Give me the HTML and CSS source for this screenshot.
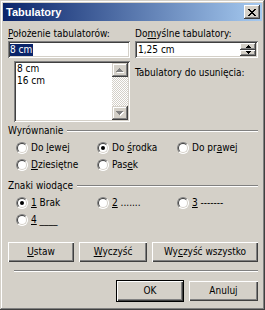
FILE: index.html
```html
<!DOCTYPE html>
<html lang="pl">
<head>
<meta charset="utf-8">
<title>Tabulatory</title>
<link rel="stylesheet" href="styles.css">
</head>
<body>
<div class="window">
  <div class="titlebar">
    <span class="title">Tabulatory</span>
    <span class="close">
      <svg width="8" height="7" viewBox="0 0 8 7" shape-rendering="crispEdges"><path d="M0 0h2v1H0zM6 0h2v1H6zM1 1h2v1H1zM5 1h2v1H5zM2 2h4v1H2zM3 3h2v1H3zM2 4h4v1H2zM1 5h2v1H1zM5 5h2v1H5zM0 6h2v1H0zM6 6h2v1H6z"/></svg>
    </span>
  </div>
  <div class="content">
    <div class="top">
      <div class="col">
        <div class="lbl"><u>P</u>ołożenie tabulatorów:</div>
        <div class="edit"><span class="sel">8 cm</span></div>
        <div class="listbox">
          <div class="items">
            <div>8 cm</div>
            <div>16 cm</div>
          </div>
          <div class="vscroll">
            <div class="sbtn">
              <svg width="8" height="5" viewBox="0 0 8 5" shape-rendering="crispEdges"><path fill="#fff" d="M4 1h1v1H4zM3 2h3v1H3zM2 3h5v1H2zM1 4h7v1H1z"/><path fill="#808080" d="M3 0h1v1H3zM2 1h3v1H2zM1 2h5v1H1zM0 3h7v1H0z"/></svg>
            </div>
            <div class="track"></div>
            <div class="sbtn">
              <svg width="8" height="5" viewBox="0 0 8 5" shape-rendering="crispEdges"><path fill="#fff" d="M1 1h7v1H1zM2 2h5v1H2zM3 3h3v1H3zM4 4h1v1H4z"/><path fill="#808080" d="M0 0h7v1H0zM1 1h5v1H1zM2 2h3v1H2zM3 3h1v1H3z"/></svg>
            </div>
          </div>
        </div>
      </div>
      <div class="col">
        <div class="lbl">Do<u>m</u>yślne tabulatory:</div>
        <div class="edit spin-edit">
          <span class="val">1,25 cm</span>
          <div class="spin">
            <div class="spin-btn"><svg width="5" height="3" viewBox="0 0 5 3" shape-rendering="crispEdges"><path d="M2 0h1v1H2zM1 1h3v1H1zM0 2h5v1H0z"/></svg></div>
            <div class="spin-btn"><svg width="5" height="3" viewBox="0 0 5 3" shape-rendering="crispEdges"><path d="M0 0h5v1H0zM1 1h3v1H1zM2 2h1v1H2z"/></svg></div>
          </div>
        </div>
        <div class="lbl del">Tabulatory do usunięcia:</div>
      </div>
    </div>

    <div class="group-head"><span>Wyrównanie</span><i class="etch"></i></div>
    <div class="radios">
      <div class="opt"><span class="radio"></span><span>Do <u>l</u>ewej</span></div>
      <div class="opt"><span class="radio on"></span><span>Do <u>ś</u>rodka</span></div>
      <div class="opt"><span class="radio"></span><span>Do pr<u>a</u>wej</span></div>
      <div class="opt"><span class="radio"></span><span><u>D</u>ziesiętne</span></div>
      <div class="opt"><span class="radio"></span><span>Pas<u>e</u>k</span></div>
    </div>

    <div class="group-head second"><span>Znaki wiodące</span><i class="etch"></i></div>
    <div class="radios">
      <div class="opt"><span class="radio on"></span><span><u>1</u> Brak</span></div>
      <div class="opt"><span class="radio"></span><span><u>2</u> .......</span></div>
      <div class="opt"><span class="radio"></span><span><u>3</u> -------</span></div>
      <div class="opt"><span class="radio"></span><span><u>4</u> ____</span></div>
    </div>

    <div class="actions">
      <button class="btn w-ustaw"><u>U</u>staw</button>
      <button class="btn w-wyczysc"><u>W</u>yczyść</button>
      <button class="btn w-all">Wy<u>c</u>zyść wszystko</button>
    </div>

    <div class="separator"></div>

    <div class="footer">
      <button class="btn default w-ok">OK</button>
      <button class="btn w-cancel">Anuluj</button>
    </div>
  </div>
</div>
</body>
</html>
```

FILE: styles.css
```css
html, body {
  margin: 0;
  padding: 0;
  background: #d4d0c8;
}

.window {
  width: 265px;
  height: 310px;
  box-sizing: border-box;
  padding: 3px;
  background: #d4d0c8;
  box-shadow: inset -1px -1px #404040, inset 1px 1px #d4d0c8, inset -2px -2px #808080, inset 2px 2px #fff;
  display: flex;
  flex-direction: column;
  font-family: "DejaVu Sans Condensed", "Liberation Sans", sans-serif;
  font-size: 10px;
  color: #000;
}

.titlebar {
  height: 18px;
  display: flex;
  align-items: center;
  justify-content: space-between;
  padding: 0 2px 0 3px;
  background: linear-gradient(to right, #0a246a, #a6caf0);
}

.title {
  color: #fff;
  font-family: "Liberation Sans", sans-serif;
  font-weight: bold;
  font-size: 11px;
}

.close {
  width: 16px;
  height: 14px;
  box-sizing: border-box;
  background: #d4d0c8;
  box-shadow: inset -1px -1px #404040, inset 1px 1px #fff, inset -2px -2px #808080;
  display: flex;
  align-items: center;
  justify-content: center;
  padding-right: 1px;
}

.content {
  flex: 1;
  display: flex;
  flex-direction: column;
  padding: 6px 4px 0 5px;
}

.top {
  display: grid;
  grid-template-columns: 122px 123px;
  column-gap: 5px;
  align-items: start;
}

.col {
  display: flex;
  flex-direction: column;
}

.lbl {
  height: 13px;
  line-height: 13px;
  margin-bottom: 1px;
  white-space: nowrap;
}

.lbl.del {
  margin-top: 8px;
}

.edit {
  height: 17px;
  box-sizing: border-box;
  background: #fff;
  box-shadow: inset 1px 1px #808080, inset -1px -1px #fff, inset 2px 2px #404040, inset -2px -2px #d4d0c8;
  padding: 3px 2px 0;
  line-height: 12px;
  display: flex;
}

.sel {
  display: inline-block;
  height: 12px;
  background: #0a246a;
  color: #fff;
  padding-right: 1px;
}

.spin-edit {
  padding: 2px 2px 2px 3px;
  align-items: stretch;
}

.val {
  padding-top: 1px;
  flex: 1;
}

.spin {
  width: 16px;
  display: flex;
  flex-direction: column;
}

.spin-btn {
  flex: 1;
  background: #d4d0c8;
  box-shadow: inset -1px -1px #404040, inset 1px 1px #fff, inset -2px -2px #808080;
  display: flex;
  align-items: center;
  justify-content: center;
}

.listbox {
  margin: 3px 0 0 6px;
  height: 61px;
  box-sizing: border-box;
  background: #fff;
  box-shadow: inset 1px 1px #808080, inset -1px -1px #fff, inset 2px 2px #404040, inset -2px -2px #d4d0c8;
  padding: 2px;
  display: flex;
}

.items {
  flex: 1;
  line-height: 12px;
  padding-left: 1px;
}

.vscroll {
  width: 16px;
  display: flex;
  flex-direction: column;
}

.sbtn {
  height: 14px;
  background: #d4d0c8;
  box-shadow: inset -1px -1px #404040, inset 1px 1px #d4d0c8, inset -2px -2px #808080, inset 2px 2px #fff;
  display: flex;
  align-items: center;
  justify-content: center;
}

.track {
  flex: 1;
  background: repeating-conic-gradient(#d4d0c8 0 25%, #fff 0 50%) 0 0 / 2px 2px;
}

.group-head {
  height: 13px;
  margin-top: 2px;
  display: flex;
  align-items: center;
  gap: 4px;
  white-space: nowrap;
}

.group-head.second {
  margin-top: 6px;
}

.etch {
  flex: 1;
  height: 0;
  border-top: 1px solid #808080;
  border-bottom: 1px solid #fff;
  margin-top: 1px;
}

.radios {
  margin-top: 2px;
  padding-left: 8px;
  display: grid;
  grid-template-columns: 81px 80px 1fr;
  grid-auto-rows: 17px;
}

.opt {
  display: flex;
  align-items: center;
  gap: 3px;
  white-space: nowrap;
}

.radio {
  flex: none;
  width: 12px;
  height: 12px;
  box-sizing: border-box;
  border-radius: 50%;
  border: 1px solid;
  border-color: #808080 #fff #fff #808080;
  background: #fff;
  position: relative;
}

.radio::before {
  content: "";
  position: absolute;
  inset: 0;
  border-radius: 50%;
  border: 1px solid;
  border-color: #404040 #d4d0c8 #d4d0c8 #404040;
}

.radio.on::after {
  content: "";
  position: absolute;
  left: 3px;
  top: 3px;
  width: 4px;
  height: 4px;
  border-radius: 50%;
  background: #000;
}

.actions {
  margin-top: 14px;
  display: flex;
  gap: 5px;
}

.btn {
  height: 20px;
  box-sizing: border-box;
  border: 0;
  padding: 0;
  margin: 0;
  background: #d4d0c8;
  box-shadow: inset 1px 1px #fff, inset -1px -1px #404040, inset -2px -2px #808080;
  font: inherit;
  color: #000;
  text-align: center;
  line-height: 20px;
}

.w-ustaw { width: 66px; }
.w-wyczysc { width: 68px; }
.w-all { width: 106px; }
.w-ok { width: 66px; }
.w-cancel { width: 69px; }

.btn.default {
  outline: 1px solid #000;
}

.separator {
  margin: 8px 0 0 6px;
  height: 0;
  border-top: 1px solid #808080;
  border-bottom: 1px solid #fff;
}

.footer {
  margin-top: 9px;
  display: flex;
  justify-content: flex-end;
  gap: 6px;
}
```
